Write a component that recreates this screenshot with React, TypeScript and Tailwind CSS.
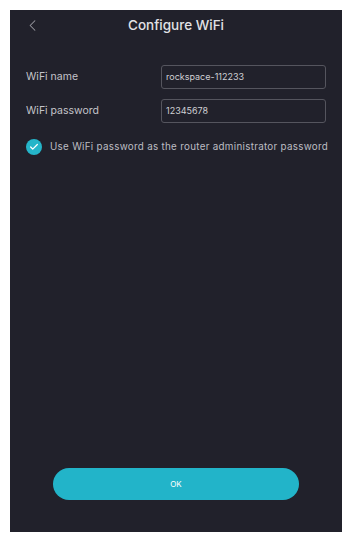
import { ChevronLeft, Check } from "lucide-react";

export default function App() {
  return (
    <div className="min-h-[544px] w-[351px] bg-white pt-[10px] pl-[10px] font-['Inter',sans-serif]">
      <div className="flex h-[522px] w-[332px] flex-col bg-[#21212b]">
        <div className="relative flex h-[30px] items-center justify-center pt-[1px]">
          <ChevronLeft className="absolute left-[13px] top-[6px] h-[19px] w-[19px] text-[#9a9aa2]" strokeWidth={1.3} />
          <span className="text-[13.5px] font-medium text-[#e2e2e6]">Configure WiFi</span>
        </div>

        <div className="mt-[25px] flex flex-col gap-[10px] pl-[16px] pr-[16px]">
          <div className="flex items-center justify-between">
            <span className="text-[10.5px] text-[#c4c4ca]">WiFi name</span>
            <div className="flex h-[24px] w-[165px] items-center rounded-[3px] border border-[#55555e] px-[4px] text-[9px] text-[#d0d0d4]">
              rockspace-112233
            </div>
          </div>
          <div className="flex items-center justify-between">
            <span className="text-[10.5px] text-[#c4c4ca]">WiFi password</span>
            <div className="flex h-[24px] w-[165px] items-center rounded-[3px] border border-[#55555e] px-[4px] text-[9px] text-[#d0d0d4]">
              12345678
            </div>
          </div>
        </div>

        <div className="mt-[16px] flex items-center gap-[8px] pl-[16px]">
          <div className="flex h-[16px] w-[16px] items-center justify-center rounded-full bg-[#25b5c9]">
            <Check className="h-[10px] w-[10px] text-white" strokeWidth={3} />
          </div>
          <span className="text-[9.8px] tracking-[0.3px] text-[#bdbdc3]">
            Use WiFi password as the router administrator password
          </span>
        </div>

        <div className="flex-1" />

        <div className="mb-[32px] flex justify-center pr-[43px] pl-[43px]">
          <button className="flex h-[32px] w-full items-center justify-center rounded-full bg-[#22b4c9] text-[8px] text-white">
            OK
          </button>
        </div>
      </div>
    </div>
  );
}
